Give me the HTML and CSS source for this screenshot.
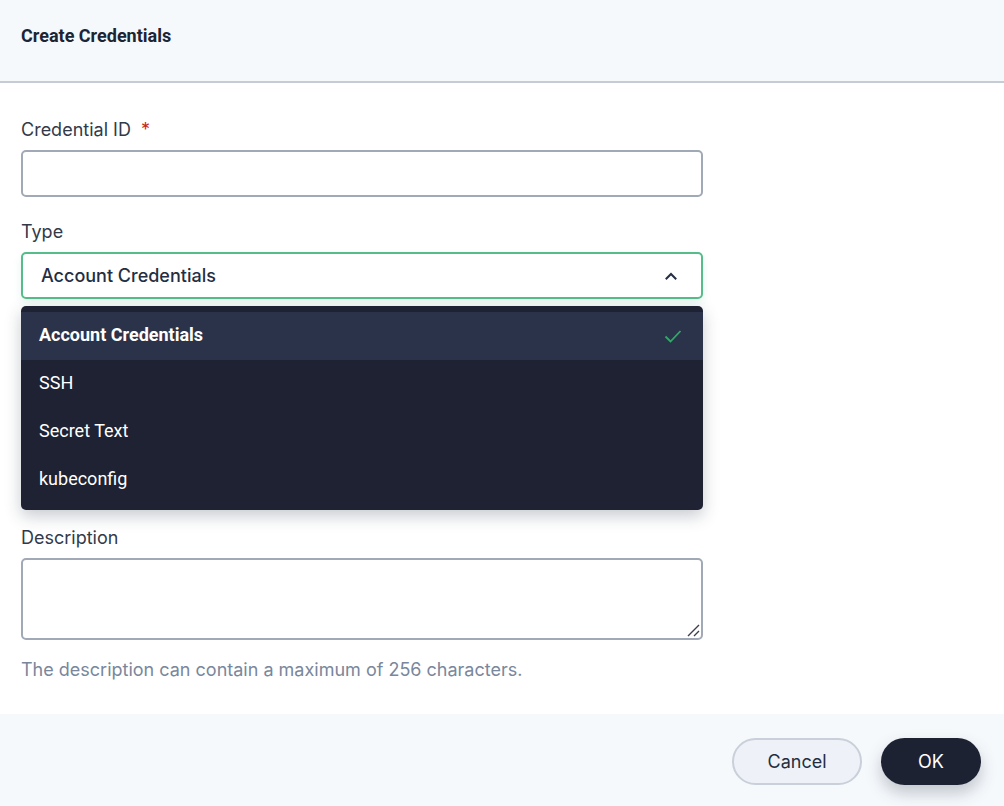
FILE: index.html
```html
<!DOCTYPE html>
<html lang="en">
<head>
<meta charset="utf-8">
<title>Create Credentials</title>
<link rel="stylesheet" href="styles.css">
</head>
<body>
<div class="modal">
  <header class="modal-header">
    <h1 class="title">Create Credentials</h1>
  </header>
  <main class="modal-body">
    <div class="field">
      <label class="label">Credential ID <span class="req">*</span></label>
      <div class="input"></div>
    </div>
    <div class="field field-type">
      <label class="label">Type</label>
      <div class="select-wrap">
        <div class="select">
          <span class="select-value">Account Credentials</span>
          <svg class="chevron" width="16" height="16" viewBox="0 0 16 16"><path d="M3.5 10.5 L8 6 L12.5 10.5" fill="none" stroke="#242e42" stroke-width="2" stroke-linecap="square"/></svg>
        </div>
        <ul class="menu">
          <li class="option selected"><span>Account Credentials</span>
            <svg class="check" width="20" height="20" viewBox="0 0 20 20"><path d="M2.5 10.5 L7.5 15.5 L17.5 5" fill="none" stroke="#36a76b" stroke-width="1.8"/></svg>
          </li>
          <li class="option">SSH</li>
          <li class="option">Secret Text</li>
          <li class="option">kubeconfig</li>
        </ul>
      </div>
    </div>
    <div class="field field-desc">
      <label class="label">Description</label>
      <div class="textarea">
        <svg class="grip" width="14" height="14" viewBox="0 0 14 14"><path d="M2 13 L13 2 M8 13 L13 8" stroke="#3a3f4a" stroke-width="1.4"/></svg>
      </div>
      <p class="help">The description can contain a maximum of 256 characters.</p>
    </div>
  </main>
  <footer class="modal-footer">
    <button class="btn btn-cancel">Cancel</button>
    <button class="btn btn-ok">OK</button>
  </footer>
</div>
</body>
</html>
```
FILE: styles.css
```css
* { box-sizing: border-box; }
html, body { margin: 0; padding: 0; }
body {
  width: 1004px;
  height: 806px;
  background: #ffffff;
  font-family: Inter, Roboto, "Noto Sans", sans-serif;
  color: #242e42;
  overflow: hidden;
}
.modal { display: flex; flex-direction: column; height: 806px; }
.modal-header {
  height: 83px;
  background: #f6f9fc;
  border-bottom: 2px solid #c5ccd4;
  padding: 0 21px;
  display: flex;
  align-items: flex-start;
}
.title {
  margin: 0;
  padding-top: 25px;
  font-family: Roboto, sans-serif;
  font-weight: 700;
  font-size: 18px;
  line-height: 22px;
  color: #1d2433;
}
.modal-body {
  flex: 1;
  padding: 36px 21px 0 21px;
  background: #ffffff;
}
.field { width: 682px; }
.label {
  display: block;
  font-size: 18px;
  line-height: 22px;
  color: #323a4a;
  margin-bottom: 9px;
}
.req { color: #ca2621; margin-left: 5px; }
.input {
  height: 47px;
  border: 2px solid #a0a9b5;
  border-radius: 5px;
  background: #fff;
}
.field-type { margin-top: 24px; }
.select-wrap { position: relative; }
.select {
  height: 47px;
  border: 2px solid #55bc8a;
  border-radius: 5px;
  background: #fff;
  display: flex;
  align-items: center;
  justify-content: space-between;
  padding: 0 22px 0 18px;
  box-shadow: 0 4px 8px rgba(85, 188, 138, 0.15);
}
.select-value { font-size: 18px; font-weight: 500; color: #242e42; }
.chevron { display: block; }
.menu {
  position: absolute;
  left: 0; right: 0;
  top: 54px;
  margin: 0;
  padding: 6px 0;
  list-style: none;
  background: #1e2232;
  border-radius: 5px;
  box-shadow: 0 6px 16px rgba(36, 46, 66, 0.25);
  z-index: 10;
}
.option {
  height: 48px;
  display: flex;
  align-items: center;
  justify-content: space-between;
  padding: 0 20px 4px 18px;
  font-family: Roboto, sans-serif;
  font-size: 18px;
  color: #ffffff;
}
.option.selected { background: #2b334b; font-weight: 700; }
.check { margin-top: 4px; }
.field-desc { margin-top: 228px; }
.textarea {
  position: relative;
  height: 82px;
  border: 2px solid #a0a9b5;
  border-radius: 5px;
  background: #fff;
}
.grip { position: absolute; right: 1px; bottom: 1px; }
.help {
  margin: 19px 0 0 0;
  font-size: 18px;
  line-height: 22px;
  color: #79879c;
}
.modal-footer {
  height: 92px;
  background: #f6f9fc;
  display: flex;
  justify-content: flex-end;
  align-items: flex-start;
  gap: 19px;
  padding: 24px 23px 0 0;
}
.btn {
  height: 47px;
  border-radius: 24px;
  font-family: Inter, Roboto, sans-serif;
  font-size: 18px;
  cursor: pointer;
}
.btn-cancel {
  width: 130px;
  background: #eef2f8;
  border: 2px solid #c9d0d9;
  color: #242e42;
}
.btn-ok {
  width: 100px;
  background: #1d2233;
  border: none;
  color: #ffffff;
  box-shadow: 0 8px 16px rgba(36, 46, 66, 0.25);
}
```
